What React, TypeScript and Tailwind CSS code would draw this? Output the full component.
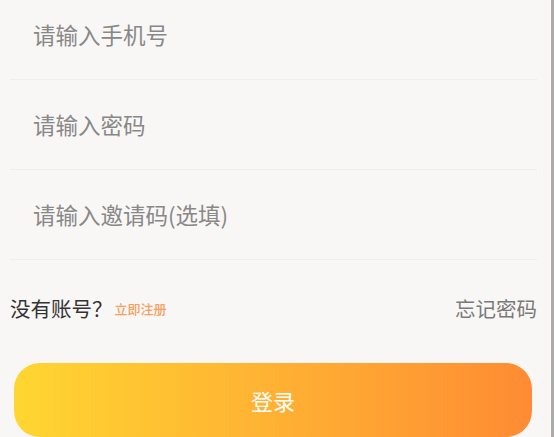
import React from 'react';

const font = { fontFamily: '"Noto Sans CJK SC", "Noto Sans", sans-serif' };

const fields = ['请输入手机号', '请输入密码', '请输入邀请码(选填)'];

export default function App() {
  return (
    <div className="flex h-[437px] w-[554px] overflow-hidden bg-[#f8f7f5]" style={font}>
      <div className="flex w-[551px] flex-col pl-[10px] pr-[14px]">
        {/* Input rows */}
        <div className="-mt-[10px] flex flex-col">
          {fields.map((f) => (
            <div key={f} className="flex h-[90px] items-center border-b border-[#efeeec] pl-[23px]">
              <input
                placeholder={f}
                className="w-full bg-transparent text-[22.5px] text-[#333] outline-none placeholder:text-[#888]"
                style={font}
              />
            </div>
          ))}
        </div>

        {/* Links */}
        <div className="mt-[33px] flex h-[30px] items-center justify-between">
          <div className="flex items-center">
            <span className="text-[20.5px] text-[#333]">没有账号？</span>
            <span className="ml-[2px] mt-[2px] text-[13px] font-medium text-[#f5a160]">立即注册</span>
          </div>
          <span className="text-[20.5px] text-[#7a7a7a]">忘记密码</span>
        </div>

        {/* Login button */}
        <button
          className="mt-[40px] ml-[4px] mr-[5px] flex h-[74px] shrink-0 items-center justify-center rounded-[26px] bg-gradient-to-r from-[#ffd631] to-[#ff8b33] text-[22px] text-white"
          style={font}
        >
          登录
        </button>
      </div>
      <div className="w-[3px] bg-[#ababab]" />
    </div>
  );
}
